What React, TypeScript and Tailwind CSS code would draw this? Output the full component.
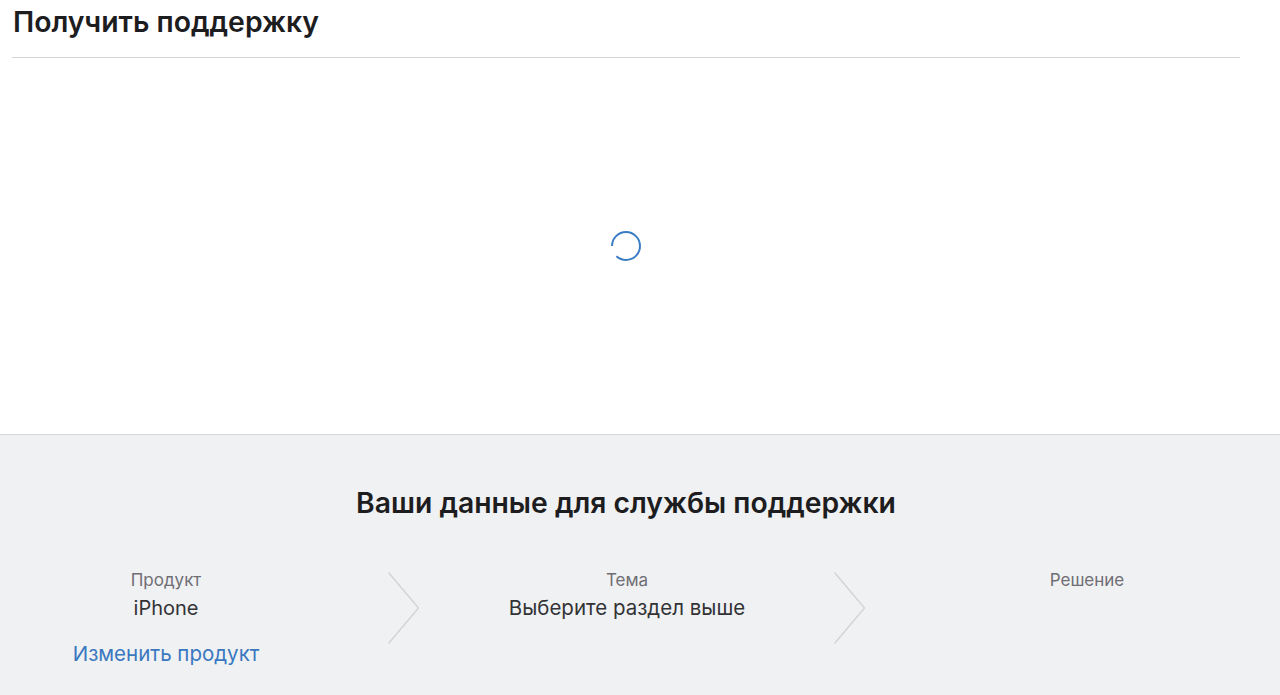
import React from "react";

function Chevron() {
  return (
    <svg width="32" height="72" viewBox="0 0 32 72" className="shrink-0 mt-[3px]">
      <polyline points="0.5,0.5 30.5,36 0.5,71.5" fill="none" stroke="#d2d2d7" strokeWidth="1.3" />
    </svg>
  );
}

export default function App() {
  const font = { fontFamily: "Inter, 'Noto Sans', sans-serif" };
  return (
    <div className="w-[1280px] h-[695px] overflow-hidden bg-white flex flex-col" style={font}>
      <div className="w-[1240px] pl-[12px]">
        <div className="border-b border-[#d6d6d6] h-[58px]">
          <h1 className="pt-[4px] pl-[1px] text-[28.4px] leading-[36px] font-semibold text-[#1d1d1f]">
            Получить поддержку
          </h1>
        </div>
        <div className="h-[376px] flex items-center justify-center">
          <svg width="34" height="34" viewBox="0 0 34 34">
            <circle
              cx="17"
              cy="17"
              r="14"
              fill="none"
              stroke="#3b7dc4"
              strokeWidth="2"
              strokeDasharray="76 12"
              transform="rotate(180 17 17)"
            />
          </svg>
        </div>
      </div>
      <div className="flex-1 bg-[#f0f1f3] border-t border-[#d6d6d6] overflow-hidden">
        <div className="w-[1252px] pt-[51px]">
          <h2 className="text-center text-[28.3px] leading-[34px] font-semibold text-[#1d1d1f]">
            Ваши данные для службы поддержки
          </h2>
        </div>
        <div className="flex mt-[49px] w-[1400px]">
          <div className="w-[332px] flex flex-col items-center">
            <div className="text-[17px] leading-[22px] text-[#6e6e73]">Продукт</div>
            <div className="mt-[4px] text-[20px] leading-[26px] text-[#333336]">iPhone</div>
            <a className="mt-[20px] text-[20.5px] leading-[26px] text-[#3a78c0]">Изменить продукт</a>
          </div>
          <div className="ml-[56px]">
            <Chevron />
          </div>
          <div className="w-[414px] flex flex-col items-center">
            <div className="text-[17px] leading-[22px] text-[#6e6e73]">Тема</div>
            <div className="mt-[4px] text-[20.5px] leading-[26px] text-[#333336]">Выберите раздел выше</div>
          </div>
          <Chevron />
          <div className="w-[442px] flex flex-col items-center">
            <div className="text-[17px] leading-[22px] text-[#6e6e73]">Решение</div>
          </div>
        </div>
      </div>
    </div>
  );
}
